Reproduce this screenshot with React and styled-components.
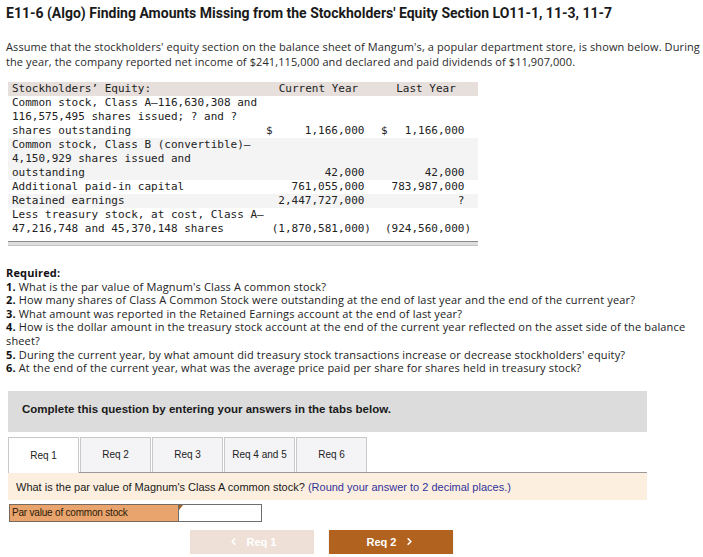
import React from "react";
import styled, { createGlobalStyle } from "styled-components";
import { ChevronLeft, ChevronRight } from "lucide-react";

const Global = createGlobalStyle`
  body {
    margin: 0;
    background: #fff;
    color: #222;
    font-family: "Open Sans", Roboto, sans-serif;
  }
`;

const rows = [
  {
    label: "Common stock, Class A–116,630,308 and 116,575,495 shares issued; ? and ? shares outstanding",
    cur: "1,166,000",
    last: "1,166,000",
    dollar: true,
  },
  {
    label: "Common stock, Class B (convertible)– 4,150,929 shares issued and outstanding",
    cur: "42,000",
    last: "42,000",
    shade: true,
  },
  { label: "Additional paid-in capital", cur: "761,055,000", last: "783,987,000" },
  { label: "Retained earnings", cur: "2,447,727,000", last: "?", shade: true },
  {
    label: "Less treasury stock, at cost, Class A– 47,216,748 and 45,370,148 shares",
    cur: "(1,870,581,000)",
    last: "(924,560,000)",
    neg: true,
  },
];

const questions = [
  ["1.", "What is the par value of Magnum's Class A common stock?"],
  ["2.", "How many shares of Class A Common Stock were outstanding at the end of last year and the end of the current year?"],
  ["3.", "What amount was reported in the Retained Earnings account at the end of last year?"],
  ["4.", "How is the dollar amount in the treasury stock account at the end of the current year reflected on the asset side of the balance sheet?"],
  ["5.", "During the current year, by what amount did treasury stock transactions increase or decrease stockholders' equity?"],
  ["6.", "At the end of the current year, what was the average price paid per share for shares held in treasury stock?"],
];

const tabs = ["Req 1", "Req 2", "Req 3", "Req 4 and 5", "Req 6"];

function App() {
  return (
    <Page>
      <Global />
      <Title>E11-6 (Algo) Finding Amounts Missing from the Stockholders' Equity Section LO11-1, 11-3, 11-7</Title>
      <Intro>
        Assume that the stockholders' equity section on the balance sheet of Mangum's, a popular department store, is shown below. During
        <br />
        the year, the company reported net income of $241,115,000 and declared and paid dividends of $11,907,000.
      </Intro>

      <Sheet>
        <Row $head>
          <Label>Stockholders’ Equity:</Label>
          <HeadCell>Current Year</HeadCell>
          <HeadCell $last>Last Year</HeadCell>
        </Row>
        {rows.map((r) => (
          <Row key={r.label} $shade={r.shade}>
            <Label>{r.label}</Label>
            <Amount>
              <span>{r.dollar ? "$" : ""}</span>
              <Num $neg={r.neg}>{r.cur}</Num>
            </Amount>
            <Amount $last>
              <span>{r.dollar ? "$" : ""}</span>
              <Num $neg={r.neg}>{r.last}</Num>
            </Amount>
          </Row>
        ))}
        <SheetFoot />
      </Sheet>

      <Required>
        <strong>Required:</strong>
        {questions.map(([n, q]) => (
          <div key={n}>
            <strong>{n}</strong> {q}
          </div>
        ))}
      </Required>

      <Instruction>Complete this question by entering your answers in the tabs below.</Instruction>

      <Tabs>
        {tabs.map((t, i) => (
          <Tab key={t} $active={i === 0}>{t}</Tab>
        ))}
      </Tabs>
      <Panel>
        What is the par value of Magnum's Class A common stock? <Hint>(Round your answer to 2 decimal places.)</Hint>
      </Panel>

      <AnswerRow>
        <AnswerLabel>Par value of common stock</AnswerLabel>
        <AnswerInput />
      </AnswerRow>

      <Nav>
        <NavButton $disabled>
          <ChevronLeft size={11} strokeWidth={3.5} />
          Req 1
        </NavButton>
        <NavButton>
          Req 2
          <ChevronRight size={11} strokeWidth={3.5} />
        </NavButton>
      </Nav>
    </Page>
  );
}

const Page = styled.div`
  width: 703px;
  padding: 4px 0 0 6px;
  box-sizing: border-box;
`;

const Title = styled.h1`
  margin: 0;
  font-family: Roboto, "Liberation Sans", sans-serif;
  font-size: 14px;
  line-height: 18px;
  font-weight: 700;
  color: #1a1a1a;
`;

const Intro = styled.p`
  margin: 18px 0 0;
  font-size: 11px;
  letter-spacing: 0.1px;
  line-height: 14.5px;
  color: #2a2a2a;
  white-space: nowrap;
`;

const Sheet = styled.div`
  width: 470px;
  margin: 13px 0 0 2px;
  font-family: "DejaVu Sans Mono", "Liberation Mono", monospace;
  font-size: 11px;
  line-height: 14px;
  color: #222;
`;

const Row = styled.div`
  display: grid;
  grid-template-columns: 258px 105px 100px;
  padding-right: 7px;
  align-items: end;
  background: ${(p) => (p.$head ? "#e6dfdc" : p.$shade ? "#f4f4f4" : "#fff")};
`;

const Label = styled.div`
  padding-left: 4px;
`;

const HeadCell = styled.div`
  text-align: center;
  padding-left: ${(p) => (p.$last ? "10px" : "0")};
`;

const Amount = styled.div`
  display: flex;
  justify-content: space-between;
  white-space: pre;
  padding-left: ${(p) => (p.$last ? "10px" : "0")};
`;

const Num = styled.span`
  padding-right: ${(p) => (p.$neg ? "0" : "1ch")};
`;

const SheetFoot = styled.div`
  margin-top: 5px;
  height: 3px;
  border-top: 1px solid #8a8a8a;
  border-bottom: 1px solid #c4c4c4;
  background: #dedede;
`;

const Required = styled.div`
  margin-top: 20px;
  font-size: 11px;
  letter-spacing: 0.15px;
  line-height: 13.6px;
  color: #222;
  width: 690px;

  strong {
    font-weight: 700;
    color: #111;
  }
`;

const Instruction = styled.div`
  margin: 16px 0 0 2px;
  width: 639px;
  height: 41px;
  box-sizing: border-box;
  padding: 12px 14px;
  background: #dcdcdc;
  font-family: "Liberation Sans", Arial, sans-serif;
  font-size: 11.5px;
  font-weight: 700;
  color: #1a1a1a;
`;

const Tabs = styled.div`
  display: flex;
  gap: 1px;
  margin: 5px 0 0 2px;
  position: relative;
  z-index: 1;
`;

const Tab = styled.div`
  width: 71px;
  box-sizing: border-box;
  display: flex;
  align-items: center;
  justify-content: center;
  font-family: "Liberation Sans", Arial, sans-serif;
  font-size: 10px;
  color: #222;
  border: 1px solid #c8c8c8;
  border-bottom: none;
  background: ${(p) => (p.$active ? "#fff" : "#f4f4f6")};
  margin-bottom: ${(p) => (p.$active ? "-1px" : "0")};
  height: ${(p) => (p.$active ? "36px" : "35px")};
`;

const Panel = styled.div`
  margin-left: 2px;
  width: 639px;
  height: 28px;
  box-sizing: border-box;
  border-top: 1px solid #9a9a9a;
  background: #fcefdf;
  padding: 8px 8px 0;
  font-family: "Liberation Sans", Arial, sans-serif;
  font-size: 11px;
  color: #1a1a1a;
`;

const Hint = styled.span`
  color: #33339a;
`;

const AnswerRow = styled.div`
  display: flex;
  margin: 4px 0 0 3px;
  height: 18px;
`;

const AnswerLabel = styled.div`
  width: 169px;
  box-sizing: border-box;
  background: #e8a46c;
  border: 1px solid #7a6a5e;
  border-right: none;
  padding: 2px 2px 0;
  font-family: "Liberation Sans", Arial, sans-serif;
  font-size: 10px;
  letter-spacing: -0.2px;
  color: #2a1a0a;
`;

const AnswerInput = styled.div`
  position: relative;
  width: 84px;
  box-sizing: border-box;
  background: #fff;
  border: 1px solid #6e6e6e;

  &::before {
    content: "";
    position: absolute;
    top: 0;
    left: 0;
    border-top: 5px solid #a0602a;
    border-right: 4px solid transparent;
  }
`;

const Nav = styled.div`
  display: flex;
  gap: 15px;
  margin: 8px 0 0 184px;
`;

const NavButton = styled.div`
  width: 124px;
  height: 24px;
  display: flex;
  align-items: center;
  justify-content: center;
  gap: 8px;
  font-family: "Liberation Sans", Arial, sans-serif;
  font-size: 11px;
  font-weight: 700;
  color: #fff;
  background: ${(p) => (p.$disabled ? "#eee0d6" : "#b2621f")};
  box-shadow: ${(p) => (p.$disabled ? "none" : "0 1px 1px rgba(0,0,0,0.25)")};
`;

export default App;
